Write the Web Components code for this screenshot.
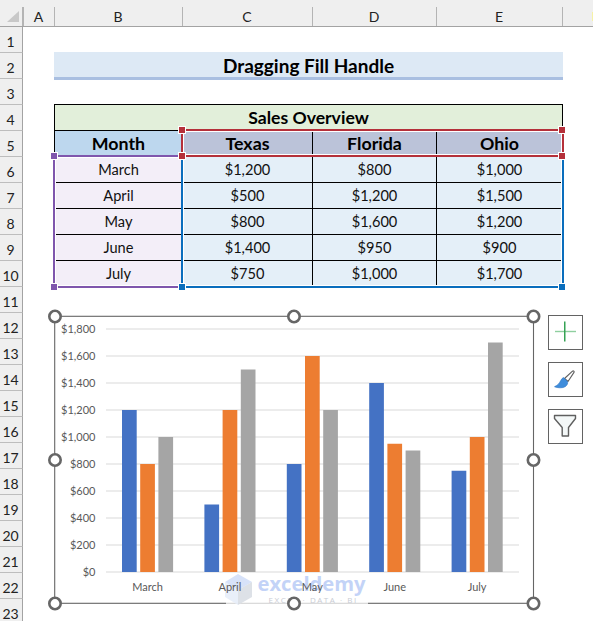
<!DOCTYPE html>
<html lang="en">
<head>
<meta charset="utf-8">
<title>Dragging Fill Handle</title>
<style>
html,body{margin:0;padding:0;background:#fff;overflow:hidden;height:621px}
body{font-family:Lato,"Liberation Sans",sans-serif}
</style>
</head>
<body>
<x-sheet>
  <x-head kind="corner" style="grid-area:1/1"></x-head>
  <x-head kind="col" style="grid-area:1/2">A</x-head>
  <x-head kind="col" style="grid-area:1/3">B</x-head>
  <x-head kind="col" style="grid-area:1/4">C</x-head>
  <x-head kind="col" style="grid-area:1/5">D</x-head>
  <x-head kind="col" style="grid-area:1/6">E</x-head>
  <x-head kind="end" style="grid-area:1/7"></x-head>

  <x-head kind="row" first style="grid-area:2/1">1</x-head>
  <x-head kind="row" style="grid-area:3/1">2</x-head>
  <x-head kind="row" style="grid-area:4/1">3</x-head>
  <x-head kind="row" style="grid-area:5/1">4</x-head>
  <x-head kind="row" style="grid-area:6/1">5</x-head>
  <x-head kind="row" style="grid-area:7/1">6</x-head>
  <x-head kind="row" style="grid-area:8/1">7</x-head>
  <x-head kind="row" style="grid-area:9/1">8</x-head>
  <x-head kind="row" style="grid-area:10/1">9</x-head>
  <x-head kind="row" style="grid-area:11/1">10</x-head>
  <x-head kind="row" style="grid-area:12/1">11</x-head>
  <x-head kind="row" style="grid-area:13/1">12</x-head>
  <x-head kind="row" style="grid-area:14/1">13</x-head>
  <x-head kind="row" style="grid-area:15/1">14</x-head>
  <x-head kind="row" style="grid-area:16/1">15</x-head>
  <x-head kind="row" style="grid-area:17/1">16</x-head>
  <x-head kind="row" style="grid-area:18/1">17</x-head>
  <x-head kind="row" style="grid-area:19/1">18</x-head>
  <x-head kind="row" style="grid-area:20/1">19</x-head>
  <x-head kind="row" style="grid-area:21/1">20</x-head>
  <x-head kind="row" style="grid-area:22/1">21</x-head>
  <x-head kind="row" style="grid-area:23/1">22</x-head>
  <x-head kind="row" style="grid-area:24/1">23</x-head>

  <x-title style="grid-area:3/3/3/7">Dragging Fill Handle</x-title>

  <x-cell kind="caption" last style="grid-area:5/3/5/7">Sales Overview</x-cell>
  <x-cell kind="month" style="grid-area:6/3">Month</x-cell>
  <x-cell kind="state" style="grid-area:6/4">Texas</x-cell>
  <x-cell kind="state" style="grid-area:6/5">Florida</x-cell>
  <x-cell kind="state" last style="grid-area:6/6">Ohio</x-cell>

  <x-cell kind="name" style="grid-area:7/3">March</x-cell>
  <x-cell kind="value" style="grid-area:7/4">$1,200</x-cell>
  <x-cell kind="value" style="grid-area:7/5">$800</x-cell>
  <x-cell kind="value" last style="grid-area:7/6">$1,000</x-cell>

  <x-cell kind="name" style="grid-area:8/3">April</x-cell>
  <x-cell kind="value" style="grid-area:8/4">$500</x-cell>
  <x-cell kind="value" style="grid-area:8/5">$1,200</x-cell>
  <x-cell kind="value" last style="grid-area:8/6">$1,500</x-cell>

  <x-cell kind="name" style="grid-area:9/3">May</x-cell>
  <x-cell kind="value" style="grid-area:9/4">$800</x-cell>
  <x-cell kind="value" style="grid-area:9/5">$1,600</x-cell>
  <x-cell kind="value" last style="grid-area:9/6">$1,200</x-cell>

  <x-cell kind="name" style="grid-area:10/3">June</x-cell>
  <x-cell kind="value" style="grid-area:10/4">$1,400</x-cell>
  <x-cell kind="value" style="grid-area:10/5">$950</x-cell>
  <x-cell kind="value" last style="grid-area:10/6">$900</x-cell>

  <x-cell kind="name" style="grid-area:11/3">July</x-cell>
  <x-cell kind="value" style="grid-area:11/4">$750</x-cell>
  <x-cell kind="value" style="grid-area:11/5">$1,000</x-cell>
  <x-cell kind="value" last style="grid-area:11/6">$1,700</x-cell>

  <x-range color="#7f56ad" sides="left top bottom" handles="tl bl" style="left:53px;top:155px;width:130px;height:133px"></x-range>
  <x-range color="#0a6ebd" sides="left right bottom" handles="bl br" style="left:181px;top:155px;width:383px;height:133px"></x-range>
  <x-range color="#b5303a" sides="left right top bottom" handles="tl tr bl br" style="left:181px;top:129px;width:383px;height:28px"></x-range>

  <x-chart></x-chart>
  <x-chart-tools></x-chart-tools>
</x-sheet>

<script>
function shadow(el, html){
  el.attachShadow({mode:'open'}).innerHTML = html;
}

class XSheet extends HTMLElement{
  constructor(){
    super();
    shadow(this,`<style>
      :host{display:grid;position:relative;width:593px;height:621px;overflow:hidden;background:#fff;
        grid-template-columns:23px 31px 128px 130px 124px 126px 31px;
        grid-template-rows:27px 25px repeat(22,26px);
        font-family:Lato,"Liberation Sans",sans-serif;color:#000}
    </style><slot></slot>`);
  }
}

class XHead extends HTMLElement{
  constructor(){
    super();
    shadow(this,`<style>
      :host{display:flex;box-sizing:border-box;background:#efefef;color:#222;font-size:14px;line-height:1;min-width:0}
      :host([kind=col]){border-bottom:1px solid #a3a3a3;align-items:center;justify-content:center;padding-top:8px;position:relative}
      :host([kind=col])::before,:host([kind=end])::before,:host([kind=corner])::before{content:"";position:absolute;left:0;top:7px;bottom:0;width:1px;background:#b4b4b4}
      :host([kind=col]),:host([kind=end]),:host([kind=corner]){position:relative;border-bottom:1px solid #a3a3a3}
      :host([kind=corner])::before{left:auto;right:0;background:#b4b4b4}
      :host([kind=end]){background:#efefef no-repeat right 12px/1px 9px linear-gradient(#f6f2a6,#f6f2a6)}
      :host([kind=row]){border-right:1px solid #a3a3a3;border-top:1px solid #bdbdbd;align-items:flex-end;justify-content:center;padding-bottom:3px;padding-right:1px}
      :host([first]){border-top:0}
      svg{position:absolute;left:7px;top:11px}
    </style><slot></slot>`);
    if(this.getAttribute('kind')==='corner'){
      this.shadowRoot.innerHTML += '<svg width="12" height="11" viewBox="0 0 12 11"><polygon points="0,11 12,0 12,11" fill="#c8c8c8"/></svg>';
    }
  }
}

class XTitle extends HTMLElement{
  constructor(){
    super();
    shadow(this,`<style>
      :host{display:flex;align-items:center;justify-content:center;box-sizing:border-box;height:28px;margin-right:-1px;
        background:#dde9f5;border-bottom:3px solid #a9bfe1;padding-top:2px;
        font-size:19px;font-weight:700;line-height:1;color:#000}
    </style><slot></slot>`);
  }
}

class XCell extends HTMLElement{
  constructor(){
    super();
    shadow(this,`<style>
      :host{display:flex;align-items:center;justify-content:center;box-sizing:border-box;min-width:0;
        border-left:1px solid #000;border-top:1px solid #000;padding-top:2px;font-size:14.6px;line-height:1;color:#111}
      :host([last]){border-right:1px solid #000;margin-right:-1px}
      :host([kind=caption]){background:#e2efda;font-weight:700;font-size:17.6px;color:#000;padding-top:1px}
      :host([kind=month]){background:#bdd7ee;font-weight:700;font-size:17.8px;color:#000;padding-top:1px}
      :host([kind=state]){background:#bbc3d9;font-weight:700;font-size:17.8px;color:#000;padding-top:1px}
      :host([kind=name]){background:#f3eef8}
      :host([kind=value]){background:#e4eff8}
    </style><slot></slot>`);
  }
}

class XRange extends HTMLElement{
  constructor(){
    super();
    const sides=(this.getAttribute('sides')||'').split(' ');
    const hs=(this.getAttribute('handles')||'').split(' ');
    const c=this.getAttribute('color');
    const bar=s=>`<i class="bar ${s}"></i>`;
    const handle=h=>`<b class="h ${h}"></b>`;
    shadow(this,`<style>
      :host{display:block;position:absolute;box-sizing:border-box;--c:${c};pointer-events:none}
      .bar{position:absolute;background:var(--c)}
      .left{left:0;top:0;bottom:0;width:2px;box-shadow:1px 0 0 #fff}
      .right{right:0;top:0;bottom:0;width:2px;box-shadow:-1px 0 0 #fff}
      .top{left:0;right:0;top:0;height:2px;box-shadow:0 1px 0 #fff}
      .bottom{left:0;right:0;bottom:0;height:2px;box-shadow:0 -1px 0 #fff}
      .h{position:absolute;width:6px;height:6px;background:var(--c);border:1px solid #fff}
      .tl{left:-3px;top:-3px}.tr{right:-2px;top:-3px}
      .bl{left:-3px;bottom:-3px}.br{right:-2px;bottom:-3px}
    </style>${sides.map(bar).join('')}${hs.map(handle).join('')}`);
  }
}

class XChart extends HTMLElement{
  constructor(){
    super();
    const W=480,H=288,ox=54,oy=316;
    const zero=572-oy, k=0.135;
    const ticks=[0,200,400,600,800,1000,1200,1400,1600,1800];
    const data=[['March',1200,800,1000],['April',500,1200,1500],['May',800,1600,1200],['June',1400,950,900],['July',750,1000,1700]];
    const colors=['#4472c4','#ed7d31','#a5a5a5'];
    let grid='',labels='',bars='';
    ticks.forEach(t=>{
      const y=zero-t*k;
      grid+=`<line x1="${106-ox}" x2="${519-ox}" y1="${y}" y2="${y}" stroke="#d9d9d9" stroke-width="1.2"/>`;
      labels+=`<text x="${95.5-ox}" y="${y+4}" text-anchor="end" class="t">$${t.toLocaleString('en-US')}</text>`;
    });
    data.forEach((d,i)=>{
      const gx=122+i*82.4-ox;
      [1,2,3].forEach(j=>{
        const h=d[j]*k;
        bars+=`<rect x="${gx+(j-1)*18.2}" y="${zero-h}" width="14.7" height="${h}" fill="${colors[j-1]}"/>`;
      });
      labels+=`<text x="${gx+25.5}" y="${591-oy}" text-anchor="middle" class="t">${d[0]}</text>`;
    });
    const handles=[[55,316.5],[294,316.5],[533.5,316.5],[55,460],[533.5,460],[55,603.5],[294,603.5],[533.5,603.5]];
    const hs=handles.map(p=>`<circle cx="${p[0]-ox}" cy="${p[1]-oy}" r="5.7" fill="#fff" stroke="#666" stroke-width="2.6"/>`).join('');
    shadow(this,`<style>
      :host{display:block;position:absolute;left:${ox-8}px;top:${oy-8}px;width:${W+8}px;height:${H+16}px;font-family:Lato,"Liberation Sans",sans-serif}
      svg{display:block;overflow:visible;position:absolute;left:8px;top:8px}
      .t{font-size:11px;fill:#595959;font-family:Lato,"Liberation Sans",sans-serif}
      .wm1{font-family:"Open Sans","DejaVu Sans",sans-serif;font-weight:700;font-size:20.2px;fill:#c3d3f7}
      .wm2{font-family:"Open Sans","DejaVu Sans",sans-serif;font-size:8px;letter-spacing:1.55px;fill:#c9ccd4}
    </style>
    <svg width="${W}" height="${H}" viewBox="0 0 ${W} ${H}">
      <rect x=".7" y=".3" width="478.8" height="287" fill="#fff" stroke="#666" stroke-width="1.1"/>
      ${grid}${bars}
      <g transform="translate(${-ox} ${-oy})">
        <rect x="226" y="592" width="142" height="14" fill="#fff" opacity=".72"/>
        <polygon points="238,574 252,582 252,597 238,605 225,597 225,582" fill="#fff" opacity=".5"/>
        <polygon points="238,574 252,582 238,590 225,582" fill="#c6d6f6" opacity=".7"/>
        <polygon points="225,582 238,590 238,605 225,597" fill="#e0e8f7" opacity=".7"/>
        <polygon points="252,582 252,597 238,605 238,590" fill="#d2d7df" opacity=".75"/>
        <text x="257.5" y="591" class="wm1">exceldemy</text>
        <text x="268.5" y="602.5" class="wm2">EXCEL · DATA · BI</text>
      </g>
      ${labels}
      ${hs}
    </svg>`);
  }
}

class XChartButton extends HTMLElement{
  constructor(){
    super();
    shadow(this,`<style>
      :host{display:flex;align-items:center;justify-content:center;box-sizing:border-box;width:35px;height:35px;background:#fff;border:1.4px solid #636363}
    </style><slot></slot>`);
  }
}

class XChartTools extends HTMLElement{
  constructor(){
    super();
    shadow(this,`<style>
      :host{display:flex;flex-direction:column;gap:12px;position:absolute;left:548px;top:315px}
      svg{display:block}
    </style>
    <x-chart-button title="Chart Elements">
      <svg width="24" height="24" viewBox="0 0 24 24">
        <rect x="1" y="9.8" width="21" height="1.4" fill="#8fcf9f"/>
        <rect x="10" y=".5" width="1.5" height="20" fill="#35a254"/>
      </svg>
    </x-chart-button>
    <x-chart-button title="Chart Styles">
      <svg width="26" height="26" viewBox="0 0 26 26">
        <path d="M11.5 11.5 19.5 4.2C20.4 3.5 21.6 4.3 21 5.4L15 14.5Z" fill="#fff" stroke="#5f5f5f" stroke-width="1.1" stroke-linejoin="round"/>
        <path d="M10.5 10.5C8 11.5 7.5 15 5.5 17 4.5 18 3 19 1.5 19.7 4 21 10 21.5 12.5 19.5 14.5 18 15 16 14.5 14.5Z" fill="#3f8ddb" stroke="#2f76c4" stroke-width=".6" stroke-linejoin="round"/>
      </svg>
    </x-chart-button>
    <x-chart-button title="Chart Filters">
      <svg width="26" height="26" viewBox="0 0 26 26">
        <path d="M1.5 1.5H22.5V4.5L15.5 13.5V22H9.2V13.5L1.5 4.5Z" fill="#f4f8f8" stroke="#5f5f5f" stroke-width="1.4" stroke-linejoin="round"/>
      </svg>
    </x-chart-button>`);
  }
}

customElements.define('x-sheet',XSheet);
customElements.define('x-head',XHead);
customElements.define('x-title',XTitle);
customElements.define('x-cell',XCell);
customElements.define('x-range',XRange);
customElements.define('x-chart',XChart);
customElements.define('x-chart-button',XChartButton);
customElements.define('x-chart-tools',XChartTools);
</script>
</body>
</html>
